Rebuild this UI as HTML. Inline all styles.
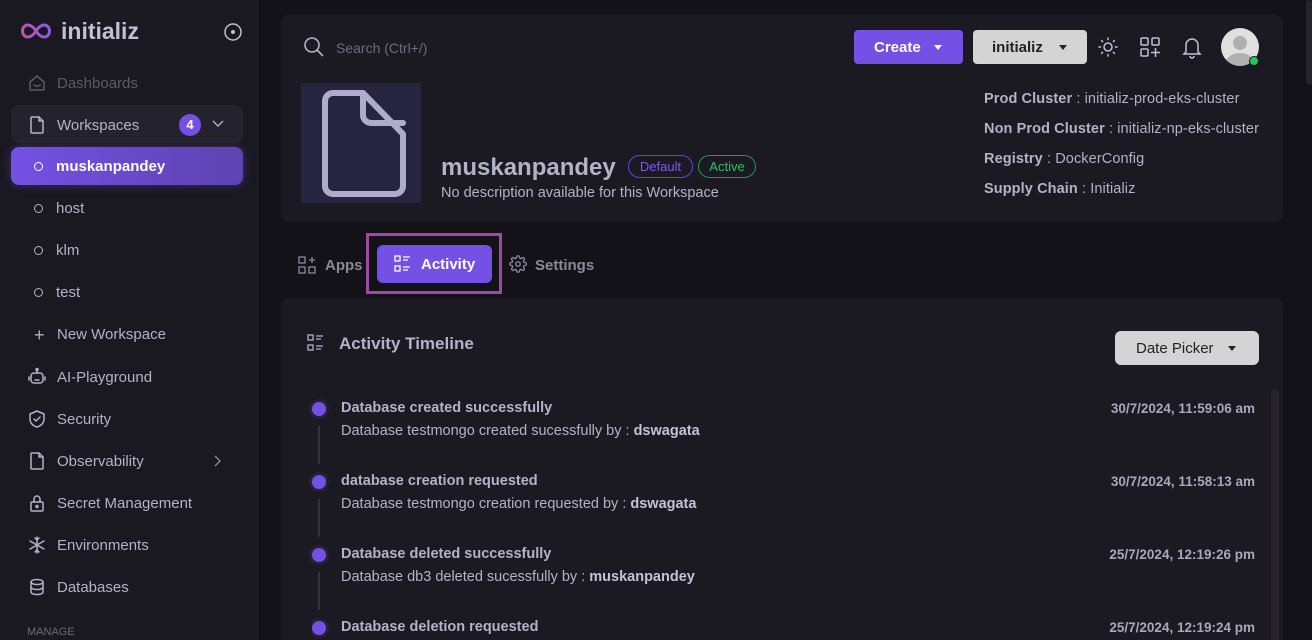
<!DOCTYPE html>
<html style="width:1312px;height:640px;overflow:hidden"><head><meta charset="utf-8"><style>
*{box-sizing:border-box;margin:0;padding:0}
body{width:1312px;height:640px;overflow:hidden;background:#141219;font-family:"Liberation Sans",sans-serif;color:#b4b2c6;position:relative}
.abs{position:absolute}
.sb{left:0;top:0;width:258px;height:640px;background:#1a1820;border-right:1px solid #222029}
.nav{position:absolute;left:27px;font-size:15px;color:#b4b2c6;display:flex;align-items:center;gap:10px}
.nav svg{width:20px;height:20px;fill:none;stroke:#b4b2c6;stroke-width:1.5;stroke-linecap:round;stroke-linejoin:round}
.sub{position:absolute;left:34px;font-size:15px;color:#b4b2c6;display:flex;align-items:center;gap:13px}
.sub i{width:9px;height:9px;border:1.3px solid #b4b2c6;border-radius:50%;display:inline-block}
.card{background:#1b1922;border-radius:8px}
b{font-weight:bold}
.dot{position:absolute;left:0;top:2px;width:14px;height:14px;border-radius:50%;background:#7451e4;box-shadow:0 0 0 3px #25213a}
.line{position:absolute;left:6px;top:26px;width:2px;height:38px;background:#35323f}
.tt{position:absolute;left:29px;top:0;font-size:14.5px;font-weight:bold;color:#b4b2c6;white-space:nowrap}
.td{position:absolute;left:29px;top:23px;font-size:14.5px;color:#b4b2c6;white-space:nowrap}
.td b{color:#c4c2d4}
.ts{position:absolute;right:0;font-size:13.5px;font-weight:bold;color:#a9a7ba;white-space:nowrap}
</style></head><body>
<div class="abs sb"></div>
<svg class="abs" style="left:20px;top:22px" width="32" height="18" viewBox="0 0 32 18"><defs><linearGradient id="g" x1="0" x2="1"><stop offset="0" stop-color="#c052b0"/><stop offset="1" stop-color="#8a5ce8"/></linearGradient></defs><path d="M16 9C13 4 10 3 7.5 3 4.5 3 2.5 6 2.5 9s2 6 5 6c2.5 0 5.5-1 8.5-6s6-6 8.5-6c3 0 5 3 5 6s-2 6-5 6c-2.5 0-5.5-1-8.5-6" fill="none" stroke="url(#g)" stroke-width="3"/></svg>
<div class="abs" style="left:61px;top:18px;font-size:23px;font-weight:bold;color:#c2c0d2">initializ</div>
<svg class="abs" style="left:223px;top:22px" width="20" height="20" viewBox="0 0 20 20"><circle cx="10" cy="10" r="8" fill="none" stroke="#c2c0d2" stroke-width="1.5"/><circle cx="10" cy="10" r="2" fill="#c2c0d2"/></svg>

<div class="nav" style="top:73px;color:#5c5a68"><svg viewBox="0 0 20 20" style="stroke:#5c5a68"><path d="M3 9l7-6 7 6v7a1 1 0 01-1 1H4a1 1 0 01-1-1z"/><path d="M7 12c1.5 1.5 4.5 1.5 6 0"/></svg>Dashboards</div>
<div class="abs" style="left:11px;top:105px;width:232px;height:38px;background:#24222c;border-radius:8px"></div>
<div class="nav" style="top:115px"><svg viewBox="0 0 20 20"><path d="M5 2h7l4 4v11a1 1 0 01-1 1H5a1 1 0 01-1-1V3a1 1 0 011-1z"/><path d="M12 2v4h4"/></svg>Workspaces</div>
<div class="abs" style="left:179px;top:114px;width:22px;height:22px;border-radius:50%;background:#7451e4;color:#fff;font-size:13px;font-weight:bold;text-align:center;line-height:22px">4</div>
<svg class="abs" style="left:211px;top:118px" width="14" height="10" viewBox="0 0 14 10"><path d="M2 3l5 5 5-5" fill="none" stroke="#b4b2c6" stroke-width="1.4"/></svg>
<div class="abs" style="left:11px;top:147px;width:232px;height:38px;background:linear-gradient(90deg,#7451e4,#5d43b0);border-radius:8px;box-shadow:0 0 10px rgba(116,81,228,.4)"></div>
<div class="sub" style="top:158px;color:#fff;font-weight:bold"><i style="border-color:#fff"></i>muskanpandey</div>
<div class="sub" style="top:200px"><i></i>host</div>
<div class="sub" style="top:242px"><i></i>klm</div>
<div class="sub" style="top:284px"><i></i>test</div>
<div class="sub" style="top:326px"><span style="font-size:18px;width:10px;line-height:14px">+</span>New Workspace</div>
<div class="nav" style="top:367px"><svg viewBox="0 0 20 20"><rect x="4" y="6" width="12" height="10" rx="3"/><path d="M10 6V3"/><circle cx="10" cy="2.5" r="1"/><path d="M2 10v3M18 10v3M8 13h4"/></svg>AI-Playground</div>
<div class="nav" style="top:409px"><svg viewBox="0 0 20 20"><path d="M10 2l7 3v5c0 4-3 7-7 8-4-1-7-4-7-8V5z"/><path d="M7 10l2 2 4-4"/></svg>Security</div>
<div class="nav" style="top:451px"><svg viewBox="0 0 20 20"><path d="M5 2h7l4 4v11a1 1 0 01-1 1H5a1 1 0 01-1-1V3a1 1 0 011-1z"/><path d="M12 2v4h4"/></svg>Observability</div>
<svg class="abs" style="left:212px;top:454px" width="10" height="14" viewBox="0 0 10 14"><path d="M3 2l5 5-5 5" fill="none" stroke="#8b899a" stroke-width="1.3"/></svg>
<div class="nav" style="top:493px"><svg viewBox="0 0 20 20"><rect x="4" y="9" width="12" height="9" rx="1"/><path d="M7 9V6a3 3 0 016 0v3"/><circle cx="10" cy="13.5" r="1"/></svg>Secret Management</div>
<div class="nav" style="top:535px"><svg viewBox="0 0 20 20"><path d="M10 2v16M3 6l14 8M17 6L3 14M8 3l2 2 2-2M8 17l2-2 2 2"/></svg>Environments</div>
<div class="nav" style="top:577px"><svg viewBox="0 0 20 20"><ellipse cx="10" cy="5" rx="6" ry="2.5"/><path d="M4 5v10c0 1.4 2.7 2.5 6 2.5s6-1.1 6-2.5V5M4 10c0 1.4 2.7 2.5 6 2.5s6-1.1 6-2.5"/></svg>Databases</div>
<div class="abs" style="left:27px;top:626px;font-size:11px;color:#6c6a78">MANAGE</div>

<div class="abs card" style="left:281px;top:15px;width:1002px;height:207px"></div>
<svg class="abs" style="left:303px;top:36px" width="22" height="22" viewBox="0 0 22 22"><circle cx="9" cy="9" r="7" fill="none" stroke="#b4b2c6" stroke-width="1.6"/><path d="M14 14l6 6" stroke="#b4b2c6" stroke-width="1.6"/></svg>
<div class="abs" style="left:336px;top:40px;font-size:14px;color:#6e6c7c">Search (Ctrl+/)</div>
<div class="abs" style="left:854px;top:30px;width:109px;height:34px;background:#7451e4;border-radius:4px;color:#fff;font-weight:bold;font-size:15px;line-height:36px;padding-left:20px">Create<span style="position:absolute;left:80px;top:15px;border:4px solid transparent;border-top:5px solid #fff"></span></div>
<div class="abs" style="left:973px;top:30px;width:114px;height:34px;background:#d4d4d4;border-radius:4px;color:#222;font-weight:bold;font-size:15px;line-height:36px;padding-left:19px">initializ<span style="position:absolute;left:86px;top:15px;border:4px solid transparent;border-top:5px solid #222"></span></div>
<svg class="abs" style="left:1097px;top:36px" width="22" height="22" viewBox="0 0 22 22" fill="none" stroke="#c2c0d2" stroke-width="1.5" stroke-linecap="round"><circle cx="11" cy="11" r="4"/><path d="M11 2v1.5M11 18.5V20M2 11h1.5M18.5 11H20M4.6 4.6l1 1M16.4 16.4l1 1M4.6 17.4l1-1M16.4 5.6l1-1"/></svg>
<svg class="abs" style="left:1139px;top:36px" width="22" height="22" viewBox="0 0 22 22" fill="none" stroke="#c2c0d2" stroke-width="1.5"><rect x="2" y="2" width="7" height="7" rx="1"/><rect x="13" y="2" width="7" height="7" rx="1"/><rect x="2" y="13" width="7" height="7" rx="1"/><path d="M16.5 12v9M12 16.5h9"/></svg>
<svg class="abs" style="left:1181px;top:35px" width="22" height="24" viewBox="0 0 22 24" fill="none" stroke="#c2c0d2" stroke-width="1.5"><path d="M5 17V10a6 6 0 0112 0v7l2 2H3z"/><path d="M9 21a2 2 0 004 0"/></svg>
<div class="abs" style="left:1221px;top:28px;width:38px;height:38px;border-radius:50%;background:#e0e0e0;overflow:hidden"><div style="position:absolute;left:12px;top:8px;width:14px;height:14px;border-radius:50%;background:#b0b0b0"></div><div style="position:absolute;left:5px;top:25px;width:28px;height:20px;border-radius:50%;background:#b0b0b0"></div></div>
<div class="abs" style="left:1249px;top:56px;width:10px;height:10px;border-radius:50%;background:#22c55e;border:1.5px solid #1b1922"></div>

<div class="abs" style="left:301px;top:83px;width:120px;height:120px;background:#272440"></div>
<svg class="abs" style="left:301px;top:83px" width="120" height="120" viewBox="0 0 120 120" fill="none" stroke="#aeaccb" stroke-width="6" stroke-linejoin="round" stroke-linecap="round"><path d="M32 10h30l40 41v52a8 8 0 01-8 8H32a8 8 0 01-8-8V18a8 8 0 018-8z"/><path d="M62 10v22a8 8 0 008 8h32"/></svg>
<div class="abs" style="left:441px;top:154px;font-size:24px;font-weight:bold;color:#b4b2c6">muskanpandey</div>
<div class="abs" style="left:628px;top:155px;width:65px;height:23px;border:1px solid #6444d8;border-radius:12px;color:#7b5cf0;font-size:13px;text-align:center;line-height:21px">Default</div>
<div class="abs" style="left:698px;top:155px;width:58px;height:23px;border:1px solid #1f9a4a;border-radius:12px;color:#22c55e;font-size:13px;text-align:center;line-height:21px">Active</div>
<div class="abs" style="left:441px;top:185px;font-size:14.5px;color:#b4b2c6">No description available for this Workspace</div>
<div class="abs" style="left:984px;top:84px;font-size:14.5px;line-height:30px;color:#b4b2c6;letter-spacing:.1px"><b>Prod Cluster</b> : initializ-prod-eks-cluster<br><b>Non Prod Cluster</b> : initializ-np-eks-cluster<br><b>Registry</b> : DockerConfig<br><b>Supply Chain</b> : Initializ</div>

<svg class="abs" style="left:298px;top:256px" width="18" height="18" viewBox="0 0 18 18" fill="none" stroke="#8b899a" stroke-width="1.3"><rect x="1" y="1" width="6" height="6"/><rect x="1" y="11" width="6" height="6"/><rect x="11" y="11" width="6" height="6"/><path d="M14 1v6M11 4h6"/></svg>
<div class="abs" style="left:325px;top:257px;font-size:15px;font-weight:bold;color:#8b899a">Apps</div>
<div class="abs" style="left:366px;top:233px;width:136px;height:61px;border:3px solid #9e4aa0"></div>
<div class="abs" style="left:377px;top:245px;width:115px;height:38px;background:#7451e4;border-radius:6px"></div>
<svg class="abs" style="left:394px;top:255px" width="18" height="18" viewBox="0 0 18 18" fill="none" stroke="#fff" stroke-width="1.3"><rect x="1" y="1" width="5" height="5"/><rect x="1" y="11" width="5" height="5"/><path d="M9 2h7M9 5h5M9 12h7M9 15h5"/></svg>
<div class="abs" style="left:421px;top:256px;font-size:15px;font-weight:bold;color:#fff">Activity</div>
<svg class="abs" style="left:509px;top:255px" width="18" height="18" viewBox="0 0 24 24" fill="none" stroke="#8b899a" stroke-width="1.8"><circle cx="12" cy="12" r="3"/><path d="M19.4 15a1.7 1.7 0 00.3 1.8l.1.1a2 2 0 11-2.8 2.8l-.1-.1a1.7 1.7 0 00-2.8 1.2V21a2 2 0 11-4 0v-.1a1.7 1.7 0 00-2.9-1.2l-.1.1a2 2 0 11-2.8-2.8l.1-.1A1.7 1.7 0 003 14H3a2 2 0 110-4h.1a1.7 1.7 0 001.2-2.9l-.1-.1a2 2 0 112.8-2.8l.1.1A1.7 1.7 0 0010 3V3a2 2 0 114 0v.1a1.7 1.7 0 002.9 1.2l.1-.1a2 2 0 112.8 2.8l-.1.1A1.7 1.7 0 0021 10h.1a2 2 0 110 4h-.1a1.7 1.7 0 00-1.6 1z"/></svg>
<div class="abs" style="left:535px;top:257px;font-size:15px;font-weight:bold;color:#8b899a">Settings</div>

<div class="abs card" style="left:281px;top:298px;width:1002px;height:342px;border-radius:8px 8px 0 0"></div>
<svg class="abs" style="left:306px;top:334px" width="20" height="18" viewBox="0 0 18 18" fill="none" stroke="#b4b2c6" stroke-width="1.3"><rect x="1" y="1" width="5" height="5"/><rect x="1" y="11" width="5" height="5"/><path d="M9 2h7M9 5h5M9 12h7M9 15h5"/></svg>
<div class="abs" style="left:339px;top:334px;font-size:17px;font-weight:bold;color:#b4b2c6">Activity Timeline</div>
<div class="abs" style="left:1115px;top:331px;width:144px;height:34px;background:#d4d4d4;border-radius:6px;color:#222;font-size:15px;line-height:36px;padding-left:21px">Date Picker<span style="position:absolute;left:113px;top:15px;border:4px solid transparent;border-top:5px solid #222"></span></div>
<div class="abs" style="left:1271px;top:389px;width:8px;height:260px;background:#26232e;border-radius:4px"></div>
<div class="abs" style="left:1306px;top:0;width:6px;height:85px;background:#24222b;border-radius:3px"></div>

<div class="abs" style="left:312px;top:400px;width:943px;height:80px"><div class="dot"></div><div class="line"></div><div class="tt">Database created successfully</div><div class="td">Database testmongo created sucessfully by : <b>dswagata</b></div><div class="ts" style="top:1px">30/7/2024, 11:59:06 am</div></div>
<div class="abs" style="left:312px;top:473px;width:943px;height:80px"><div class="dot"></div><div class="line"></div><div class="tt">database creation requested</div><div class="td">Database testmongo creation requested by : <b>dswagata</b></div><div class="ts" style="top:1px">30/7/2024, 11:58:13 am</div></div>
<div class="abs" style="left:312px;top:546px;width:943px;height:80px"><div class="dot"></div><div class="line"></div><div class="tt">Database deleted successfully</div><div class="td">Database db3 deleted sucessfully by : <b>muskanpandey</b></div><div class="ts" style="top:1px">25/7/2024, 12:19:26 pm</div></div>
<div class="abs" style="left:312px;top:619px;width:943px;height:21px;overflow:hidden"><div class="dot"></div><div class="tt">Database deletion requested</div><div class="ts" style="top:1px">25/7/2024, 12:19:24 pm</div></div>
</body></html>
